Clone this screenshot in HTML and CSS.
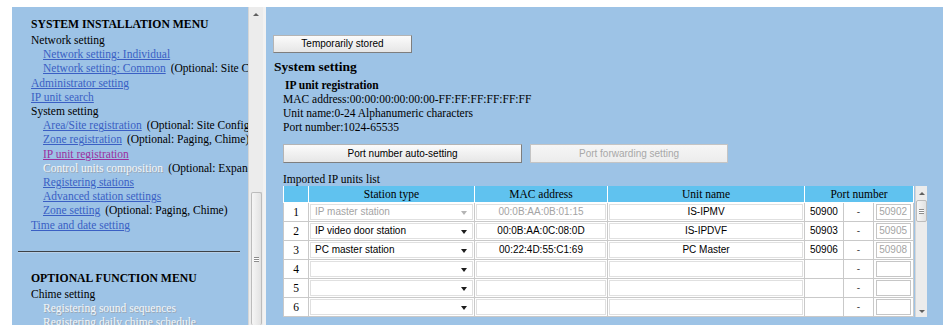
FILE: index.html
```html
<!DOCTYPE html>
<html lang="en">
<head>
    <meta charset="UTF-8">
    <title>IP unit registration</title>
    <link rel="stylesheet" href="styles.css">
</head>
<body>
    <div class="topBand"></div>
    <div class="frames">
        <div class="menuFrame">
            <div class="menu">
                <div class="menuTitle">SYSTEM INSTALLATION MENU</div>
                <div>Network setting</div>
                <div class="sub"><a href="#">Network setting: Individual</a></div>
                <div class="sub"><a href="#">Network setting: Common</a><span class="note">(Optional: Site Configuration)</span></div>
                <div><a href="#">Administrator setting</a></div>
                <div><a href="#">IP unit search</a></div>
                <div>System setting</div>
                <div class="sub"><a href="#">Area/Site registration</a><span class="note">(Optional: Site Configuration)</span></div>
                <div class="sub"><a href="#">Zone registration</a><span class="note">(Optional: Paging, Chime)</span></div>
                <div class="sub"><a href="#" class="visited">IP unit registration</a></div>
                <div class="sub"><span class="disabled">Control units composition</span><span class="note">(Optional: Expand units)</span></div>
                <div class="sub"><a href="#">Registering stations</a></div>
                <div class="sub"><a href="#">Advanced station settings</a></div>
                <div class="sub"><a href="#">Zone setting</a><span class="note">(Optional: Paging, Chime)</span></div>
                <div><a href="#">Time and date setting</a></div>
                <div class="rule"></div>
                <div class="menuTitle">OPTIONAL FUNCTION MENU</div>
                <div>Chime setting</div>
                <div class="sub"><span class="disabled">Registering sound sequences</span></div>
                <div class="sub"><span class="disabled">Registering daily chime schedule</span></div>
            </div>
            <div class="vbar menuBar">
                <div class="arrowUp"></div>
                <div class="thumb menuThumb"><div class="grip"></div></div>
            </div>
        </div>
        <div class="frameSep"></div>
        <div class="mainFrame">
            <div class="btn storeBtn">Temporarily stored</div>
            <div class="pageTitle">System setting</div>
            <div class="section">
                <div class="secTitle">IP unit registration</div>
                <div class="line">MAC address:00:00:00:00:00:00-FF:FF:FF:FF:FF:FF</div>
                <div class="line">Unit name:0-24 Alphanumeric characters</div>
                <div class="line">Port number:1024-65535</div>
                <div class="btnRow">
                    <div class="btn autoBtn">Port number auto-setting</div>
                    <div class="btn fwdBtn off">Port forwarding setting</div>
                </div>
                <div class="line listLabel">Imported IP units list</div>
                <div class="listBox">
                    <table class="unitTable">
                        <colgroup>
                            <col class="cNo"><col class="cType"><col class="cMac"><col class="cName"><col class="cFrom"><col class="cDash"><col class="cTo">
                        </colgroup>
                        <tr class="head">
                            <th></th>
                            <th>Station type</th>
                            <th>MAC address</th>
                            <th>Unit name</th>
                            <th colspan="3">Port number</th>
                        </tr>
                        <tr>
                            <td class="no">1</td>
                            <td><div class="field sel gray">IP master station<i class="caret"></i></div></td>
                            <td><div class="field mid gray">00:0B:AA:0B:01:15</div></td>
                            <td><div class="field mid">IS-IPMV</div></td>
                            <td class="port">50900</td>
                            <td class="dash">-</td>
                            <td><div class="field end gray">50902</div></td>
                        </tr>
                        <tr>
                            <td class="no">2</td>
                            <td><div class="field sel">IP video door station<i class="caret"></i></div></td>
                            <td><div class="field mid">00:0B:AA:0C:08:0D</div></td>
                            <td><div class="field mid">IS-IPDVF</div></td>
                            <td class="port">50903</td>
                            <td class="dash">-</td>
                            <td><div class="field end gray">50905</div></td>
                        </tr>
                        <tr>
                            <td class="no">3</td>
                            <td><div class="field sel">PC master station<i class="caret"></i></div></td>
                            <td><div class="field mid">00:22:4D:55:C1:69</div></td>
                            <td><div class="field mid">PC Master</div></td>
                            <td class="port">50906</td>
                            <td class="dash">-</td>
                            <td><div class="field end gray">50908</div></td>
                        </tr>
                        <tr>
                            <td class="no">4</td>
                            <td><div class="field sel"><i class="caret"></i></div></td>
                            <td><div class="field mid"></div></td>
                            <td><div class="field mid"></div></td>
                            <td class="port"></td>
                            <td class="dash">-</td>
                            <td><div class="field end"></div></td>
                        </tr>
                        <tr>
                            <td class="no">5</td>
                            <td><div class="field sel"><i class="caret"></i></div></td>
                            <td><div class="field mid"></div></td>
                            <td><div class="field mid"></div></td>
                            <td class="port"></td>
                            <td class="dash">-</td>
                            <td><div class="field end"></div></td>
                        </tr>
                        <tr>
                            <td class="no">6</td>
                            <td><div class="field sel"><i class="caret"></i></div></td>
                            <td><div class="field mid"></div></td>
                            <td><div class="field mid"></div></td>
                            <td class="port"></td>
                            <td class="dash">-</td>
                            <td><div class="field end"></div></td>
                        </tr>
                    </table>
                    <div class="vbar listBar">
                        <div class="arrowUp"></div>
                        <div class="thumb listThumb"><div class="grip"></div></div>
                        <div class="barFill"></div>
                        <div class="arrowDown"></div>
                    </div>
                </div>
            </div>
        </div>
    </div>
</body>
</html>
```

FILE: styles.css
```css
*{
    padding: 0;
    margin: 0;
    box-sizing: border-box;
}
body{
    background-color: #fff;
    color: #000;
    font-family: "Liberation Serif", "Times New Roman", serif;
    font-size: 11.5px;
}
.topBand{
    height: 7px;
}
.frames{
    display: flex;
    height: 318px;
    padding-left: 12px;
    padding-right: 4px;
}
/* left menu frame */
.menuFrame{
    display: flex;
    width: 251px;
    background-color: #9dc3e6;
}
.menu{
    width: 236px;
    overflow: hidden;
    white-space: nowrap;
    padding: 10px 0 0 19px;
    line-height: 14.2px;
}
.menuTitle{
    font-weight: bold;
    font-size: 11.7px;
    line-height: 16px;
}
.sub{
    display: flex;
    padding-left: 12px;
}
.sub a, .sub .disabled{
    flex-shrink: 0;
}
.menu a{
    color: #3a5fc4;
    text-decoration: underline;
}
.menu a.visited{
    color: #9b2f9e;
}
.note{
    min-width: 0;
    overflow: hidden;
    margin-left: 5px;
}
.disabled{
    color: #f4f6f8;
    text-shadow: 1px 1px 0 #9aa6b2;
}
.rule{
    margin: 19px 0 18px -13px;
    width: 222px;
    height: 2px;
    border-top: 1px solid #3d4248;
    border-bottom: 1px solid #b8cfe6;
}
/* scrollbars */
.vbar{
    display: flex;
    flex-direction: column;
    align-items: center;
    width: 15px;
    background-color: #ececec;
    border-left: 1px solid #d6d6d6;
}
.arrowUp{
    margin: 6px 0 6px;
    width: 0;
    height: 0;
    border-left: 3px solid transparent;
    border-right: 3px solid transparent;
    border-bottom: 3px solid #606060;
}
.arrowDown{
    margin: 5px 0 4px;
    width: 0;
    height: 0;
    border-left: 3px solid transparent;
    border-right: 3px solid transparent;
    border-top: 3px solid #606060;
}
.thumb{
    width: 11px;
    display: flex;
    align-items: center;
    justify-content: center;
    background: linear-gradient(to right, #f6f6f6, #e2e2e2);
    border: 1px solid #bcbcbc;
    border-radius: 2px;
}
.menuThumb{
    margin-top: 170px;
    flex: 1;
    border-bottom: 0;
}
.grip{
    width: 5px;
    height: 5px;
    border-top: 1px solid #8c8c8c;
    border-bottom: 1px solid #8c8c8c;
    background: linear-gradient(#fff 1px, #8c8c8c 1px, #8c8c8c 2px, #fff 2px);
    background-size: 5px 3px;
    background-repeat: no-repeat;
    background-position: 0 0;
}
.frameSep{
    width: 3px;
    background-color: #f2f2f2;
}
/* right main frame */
.mainFrame{
    flex: 1;
    background-color: #9dc3e6;
    padding: 28px 0 0 7px;
}
.btn{
    height: 18px;
    font-family: "Liberation Sans", Arial, sans-serif;
    font-size: 10px;
    line-height: 16px;
    text-align: center;
    background: linear-gradient(#fbfbfb, #e6e6e6);
    border: 1px solid #b4b4b4;
    border-right-color: #7e7e7e;
    border-bottom-color: #7e7e7e;
}
.btn.off{
    color: #a8a8a8;
    border-color: #c4c4c4;
    background: linear-gradient(#f6f6f6, #ececec);
}
.storeBtn{
    width: 139px;
}
.pageTitle{
    margin-top: 5px;
    padding-left: 1px;
    font-size: 13.5px;
    font-weight: bold;
    line-height: 17px;
}
.section{
    padding-left: 10px;
}
.secTitle{
    margin-top: 3px;
    padding-left: 2px;
    font-weight: bold;
    line-height: 14px;
}
.line{
    line-height: 14px;
}
.btnRow{
    display: flex;
    gap: 8px;
    margin-top: 10px;
}
.btnRow .btn{
    height: 19px;
    line-height: 17px;
}
.autoBtn{
    width: 239px;
}
.fwdBtn{
    width: 198px;
}
.listLabel{
    margin-top: 9px;
}
/* imported units table */
.listBox{
    display: flex;
    width: 644px;
    height: 131px;
}
.unitTable{
    width: 630px;
    table-layout: fixed;
    border-collapse: collapse;
    align-self: flex-start;
}
.cNo{ width: 25px; }
.cType{ width: 166px; }
.cMac{ width: 133px; }
.cName{ width: 197px; }
.cFrom{ width: 39px; }
.cDash{ width: 30px; }
.cTo{ width: 40px; }
.unitTable th{
    height: 16px;
    font-weight: normal;
    background-color: #60c2ef;
    border: 1px solid #fff;
    border-top: 0;
    line-height: 14px;
}
.unitTable td{
    height: 19px;
    background-color: #fff;
    border: 1px solid #c9c9c9;
    padding: 0;
    vertical-align: middle;
}
.unitTable td.no{
    text-align: center;
}
.unitTable td.port{
    padding-left: 5px;
    font-family: "Liberation Sans", Arial, sans-serif;
    font-size: 10px;
}
.unitTable td.dash{
    text-align: center;
    font-family: "Liberation Sans", Arial, sans-serif;
    font-size: 10px;
    color: #444;
}
.field{
    position: relative;
    height: 16px;
    margin: 0 1px;
    border: 1px solid #e0e0e0;
    font-family: "Liberation Sans", Arial, sans-serif;
    font-size: 10px;
    line-height: 14px;
    white-space: nowrap;
    overflow: hidden;
}
.field.sel{
    padding-left: 4px;
}
.field.mid{
    text-align: center;
}
.field.end{
    margin: 0 2px;
    border-color: #c6c6c6;
    text-align: right;
    padding-right: 3px;
}
.gray{
    color: #a4a4a4;
}
.caret{
    position: absolute;
    right: 5px;
    top: 6px;
    width: 0;
    height: 0;
    border-left: 3px solid transparent;
    border-right: 3px solid transparent;
    border-top: 4px solid #1c1c1c;
}
.gray .caret{
    border-top-color: #b4b4b4;
}
.listBar{
    width: 14px;
    height: 131px;
    margin-left: 1px;
}
.listThumb{
    height: 22px;
    margin-top: -1px;
}
.barFill{
    flex: 1;
}
```
